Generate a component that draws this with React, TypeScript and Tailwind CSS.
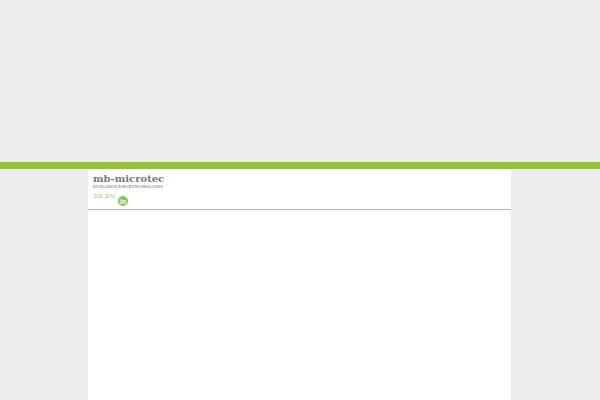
export default function App() {
	return (
		<div className="h-[400px] overflow-hidden bg-[#ececec] font-['Liberation_Sans',sans-serif]">
			<div className="h-[162px]" />
			<div className="h-[7px] bg-[#95c146]" />
			<div className="ml-[88px] h-[231px] w-[423px] bg-white">
				<div className="h-[41px] border-b border-[#b5b5b5] pl-[5px] pt-[4px]">
					<div className="font-['DejaVu_Serif',serif] text-[10px] font-bold leading-[12px] text-[#777777]">
						mb-microtec
					</div>
					<div className="text-[3.6px] font-bold uppercase leading-[4px] tracking-[-0.03px] text-[#a0a0a0]">
						Excellence in microtechnologies
					</div>
					<div className="flex items-start">
						<span className="ml-[1px] mt-[3px] text-[6px] leading-[8px] tracking-[0.6px] text-[#a5c95f]">DE</span>
						<span className="ml-[2px] mt-[3px] text-[6px] leading-[8px] tracking-[0.6px] text-[#a5c95f]">EN</span>
						<span className="ml-[3px] mt-[7px] flex h-[10px] w-[10px] items-center justify-center rounded-full bg-[#95c146] text-[7px] font-bold leading-none text-white">
							in
						</span>
					</div>
				</div>
			</div>
		</div>
	);
}
